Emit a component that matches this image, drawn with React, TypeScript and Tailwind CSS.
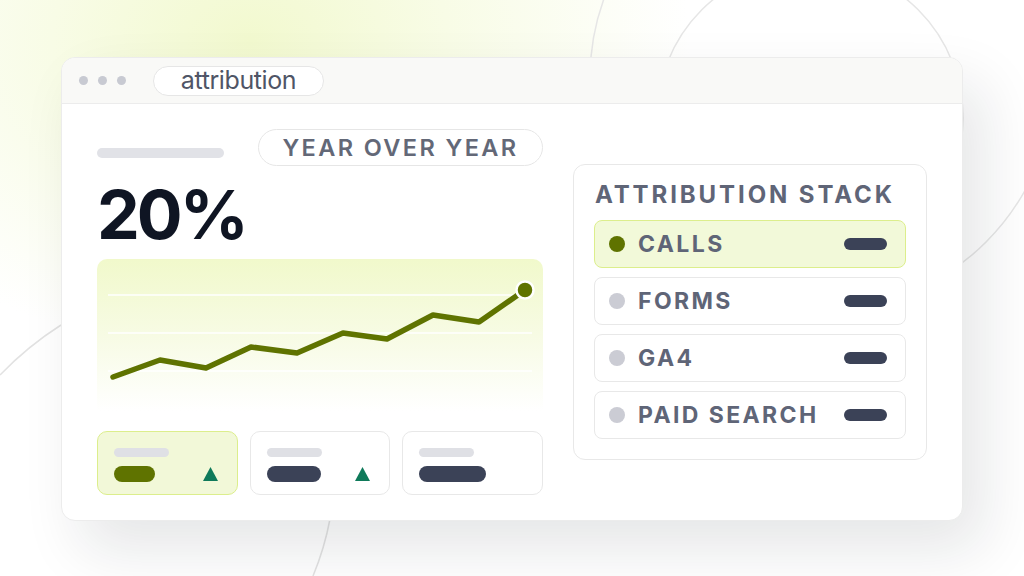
const points: [number, number][] = [
  [16, 118],
  [63, 101],
  [109, 109],
  [154, 88],
  [200, 94],
  [246, 74],
  [290, 80],
  [336, 56],
  [382, 63],
  [428, 31],
];

const stackRows = [
  { label: "CALLS", active: true },
  { label: "FORMS", active: false },
  { label: "GA4", active: false },
  { label: "PAID SEARCH", active: false },
];

const statCards = [
  { active: true, pill: "w-[41px] bg-[#5f7300]", up: true },
  { active: false, pill: "w-[54px] bg-[#3b4257]", up: true },
  { active: false, pill: "w-[67px] bg-[#3b4257]", up: false },
];

function Backdrop() {
  return (
    <svg
      className="absolute inset-0 pointer-events-none"
      width="1024"
      height="576"
      viewBox="0 0 1024 576"
      fill="none"
    >
      <circle cx="810" cy="118" r="153" stroke="#e6e6e6" strokeWidth="1.5" />
      <circle cx="822" cy="78" r="232" stroke="#e6e6e6" strokeWidth="1.5" />
      <path d="M 0 375 A 334 334 0 0 1 61 325" stroke="#e2e2e2" strokeWidth="1.5" />
      <path d="M 313 576 A 285 285 0 0 0 330 519" stroke="#e2e2e2" strokeWidth="1.5" />
    </svg>
  );
}

function TrendChart() {
  const d = points.map(([x, y], i) => `${i === 0 ? "M" : "L"}${x} ${y}`).join(" ");
  const [lx, ly] = points[points.length - 1];
  return (
    <div className="h-[152px] rounded-t-[10px] bg-linear-to-b from-[#f1f9cb] via-[#f7fbe4] to-white">
      <svg width="446" height="152" viewBox="0 0 446 152" fill="none">
        {[36, 74, 112].map((y) => (
          <line key={y} x1="11" x2="435" y1={y} y2={y} stroke="#ffffff" strokeWidth="1.5" />
        ))}
        <path d={d} stroke="#5f7300" strokeWidth="5.5" strokeLinecap="round" strokeLinejoin="round" />
        <circle cx={lx} cy={ly} r="8.5" fill="#5f7300" stroke="#ffffff" strokeWidth="2.5" />
      </svg>
    </div>
  );
}

function StatCard({ active, pill, up }: { active: boolean; pill: string; up: boolean }) {
  return (
    <div
      className={
        active
          ? "h-16 rounded-[10px] border-[1.5px] border-[#dcee8c] bg-[#f2f8d8] pl-4 pr-[19px] pt-4"
          : "h-16 rounded-[10px] border-[1.5px] border-[#e8e8e8] bg-white pl-4 pr-[19px] pt-4"
      }
    >
      <div className="h-[9px] w-[55px] rounded-full bg-[#dfe0e5]" />
      <div className="mt-[9px] flex items-center justify-between">
        <div className={`h-4 rounded-full ${pill}`} />
        {up && (
          <svg width="15" height="14" viewBox="0 0 15 14">
            <path d="M7.5 0 L15 14 L0 14 Z" fill="#0f7a5a" />
          </svg>
        )}
      </div>
    </div>
  );
}

function StackRow({ label, active }: { label: string; active: boolean }) {
  return (
    <div
      className={
        active
          ? "flex h-12 items-center rounded-lg border-[1.5px] border-[#dcee8c] bg-[#f2f9d9] pl-[14px] pr-[18px]"
          : "flex h-12 items-center rounded-lg border-[1.5px] border-[#e8e8e8] bg-white pl-[14px] pr-[18px]"
      }
    >
      <div className={active ? "h-4 w-4 rounded-full bg-[#5f7300]" : "h-4 w-4 rounded-full bg-[#cbccd4]"} />
      <span className="ml-[13px] text-[23px] font-bold leading-none tracking-[2.4px] text-[#5f6577]">
        {label}
      </span>
      <div className="ml-auto h-3 w-[43px] rounded-full bg-[#3b4257]" />
    </div>
  );
}

export default function App() {
  return (
    <div
      className="relative h-[576px] w-[1024px] overflow-hidden bg-white bg-[radial-gradient(ellipse_440px_320px_at_250px_40px,#f2f9cf_0%,#f8fce6_45%,rgba(255,255,255,0)_100%)]"
      style={{ fontFamily: "Inter, 'Noto Sans', sans-serif" }}
    >
      <Backdrop />

      <div className="relative pl-[61px] pt-[57px]">
        <div className="w-[902px] overflow-hidden rounded-[14px] border border-[#ececec] bg-white shadow-[20px_28px_60px_rgba(20,24,40,0.11)]">
          {/* Title bar */}
          <div className="flex h-[46px] items-center border-b-[1.5px] border-[#ececec] bg-[#f9f9f7] pl-[17px]">
            <div className="flex gap-[10px]">
              <div className="h-[9px] w-[9px] rounded-full bg-[#c8cad2]" />
              <div className="h-[9px] w-[9px] rounded-full bg-[#c8cad2]" />
              <div className="h-[9px] w-[9px] rounded-full bg-[#c8cad2]" />
            </div>
            <div className="ml-[27px] flex h-[30px] w-[171px] items-center justify-center rounded-full border-[1.5px] border-[#e6e6e6] bg-white pb-[1px] text-[25px] leading-none tracking-[-0.4px] text-[#4f5566]">
              attribution
            </div>
          </div>

          {/* Body */}
          <div className="flex gap-[30px] pb-[25px] pl-[35px] pr-[35px] pt-[25px]">
            <div className="w-[446px]">
              <div className="flex h-[37px] items-start justify-between">
                <div className="mt-[19px] h-[10px] w-[127px] rounded-full bg-[#e1e2e7]" />
                <div className="flex h-[37px] w-[285px] items-center justify-center rounded-full border-[1.5px] border-[#e6e6e6] text-[23.5px] font-semibold leading-none tracking-[2.4px] text-[#636877]">
                  YEAR OVER YEAR
                </div>
              </div>
              <div className="mt-[14px] text-[68px] font-bold leading-none tracking-[-3px] text-[#0f1523]">
                20%
              </div>
              <div className="mt-[11px]">
                <TrendChart />
              </div>
              <div className="mt-5 grid grid-cols-3 gap-3">
                {statCards.map((c, i) => (
                  <StatCard key={i} {...c} />
                ))}
              </div>
            </div>

            <div className="mt-[35px] h-[296px] w-[354px] rounded-xl border-[1.5px] border-[#e8e8e8] bg-white px-5 pb-5 pt-[18px]">
              <div className="pl-[1px] text-[24px] font-bold leading-none tracking-[2.9px] text-[#5f6577]">
                ATTRIBUTION STACK
              </div>
              <div className="mt-[13px] flex flex-col gap-[9px]">
                {stackRows.map((r) => (
                  <StackRow key={r.label} {...r} />
                ))}
              </div>
            </div>
          </div>
        </div>
      </div>
    </div>
  );
}
